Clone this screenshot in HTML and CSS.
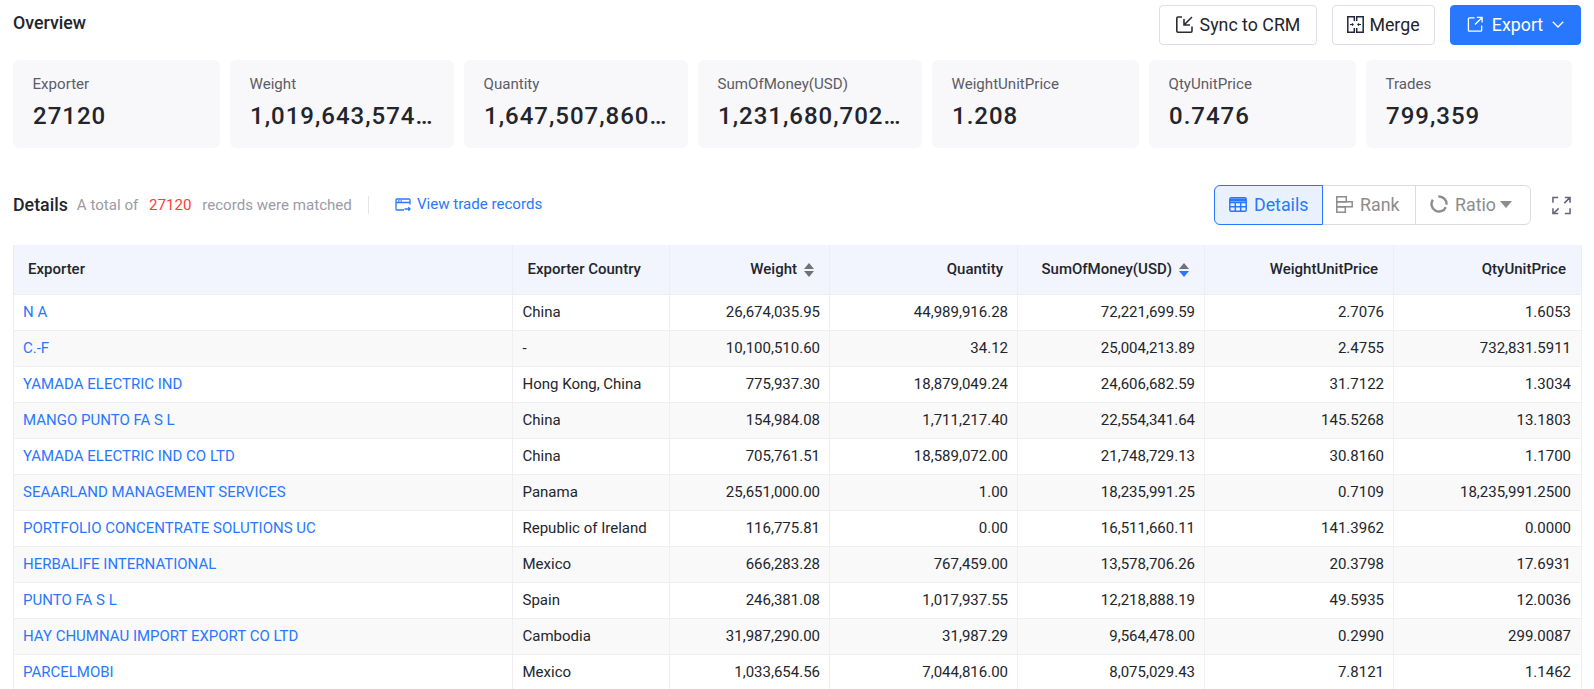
FILE: index.html
```html
<!DOCTYPE html>
<html lang="en">
<head>
    <meta charset="UTF-8">
    <title>Overview</title>
    <link rel="stylesheet" href="styles.css">
</head>
<body>
    <div class="top-bar">
        <div class="page-title">Overview</div>
        <div class="top-actions">
            <button class="btn btn-sync">
                <svg width="17" height="17" viewBox="0 0 17 17" fill="none" stroke="#2b2b33" stroke-width="1.6"><path d="M6 1H2a1.200 1.200 0 0 0-1.200 1.200V15A1.200 1.200 0 0 0 2 16.200h12.800a1.200 1.200 0 0 0 1.200-1.200v-4.500"/><path d="M16 1L8 9M8 3v6h6"/></svg>
                Sync to CRM
            </button>
            <button class="btn btn-merge">
                <svg width="17" height="17" viewBox="0 0 17 17" fill="none" stroke="#22263a" stroke-width="1.5"><path d="M7.300 5V.8H.8v15.400h6.500V12M9.700 5V.8h6.500v15.400H9.700V12"/><path d="M3 8.500h3M5 7.300l1.200 1.200L5 9.700M14 8.500h-3M12 7.300l-1.200 1.200L12 9.700" stroke-width="1.1"/></svg>
                Merge
            </button>
            <button class="btn btn-export">
                <svg width="17" height="17" viewBox="0 0 18 18" fill="none" stroke="#fff" stroke-width="1.4"><path d="M8 2H2.500a1 1 0 0 0-1 1v12a1 1 0 0 0 1 1h12a1 1 0 0 0 1-1v-5"/><path d="M10.500 1.500h5.500v5.500M16 1.500L8.500 9"/></svg>
                Export
                <svg class="chevron" width="12" height="7" viewBox="0 0 12 7" fill="none" stroke="#fff" stroke-width="1.3"><path d="M.8.8L6 6l5.200-5.200"/></svg>
            </button>
        </div>
    </div>

    <div class="cards">
        <div class="card"><div class="card-label">Exporter</div><div class="card-value">27120</div></div>
        <div class="card"><div class="card-label">Weight</div><div class="card-value">1,019,643,574.27</div></div>
        <div class="card"><div class="card-label">Quantity</div><div class="card-value">1,647,507,860.52</div></div>
        <div class="card"><div class="card-label">SumOfMoney(USD)</div><div class="card-value">1,231,680,702.18</div></div>
        <div class="card"><div class="card-label">WeightUnitPrice</div><div class="card-value">1.208</div></div>
        <div class="card"><div class="card-label">QtyUnitPrice</div><div class="card-value">0.7476</div></div>
        <div class="card"><div class="card-label">Trades</div><div class="card-value">799,359</div></div>
    </div>

    <div class="details-bar">
        <div class="details-title">Details</div>
        <div class="details-note">A total of <span class="red">27120</span> records were matched</div>
        <div class="details-sep"></div>
        <a class="trade-link">
            <svg width="16" height="13" viewBox="0 0 16 13" fill="none" stroke="#2878ff" stroke-width="1.3"><path d="M15 6.500V2a1 1 0 0 0-1-1H2a1 1 0 0 0-1 1v9a1 1 0 0 0 1 1h7"/><path d="M1 4.500h14M3 2.800h1.500M5.500 2.800H7M9.500 11H15M13.300 9.300L15 11l-1.700 1.700"/></svg>
            View trade records
        </a>
        <div class="view-tools">
            <div class="tabs">
                <div class="tab tab-details active">
                    <svg width="18" height="15" viewBox="0 0 18 15" fill="none" stroke="#2878ff" stroke-width="1.5"><rect x=".8" y=".8" width="16.400" height="13.400" rx="1.5"/><path d="M.8 5.500h16.400M.8 9.800h16.400M6.300 5.500v8.700M11.700 5.500v8.700"/><path d="M1 3h16" stroke-width="3"/></svg>
                    Details
                </div>
                <div class="tab tab-rank">
                    <svg width="17" height="17" viewBox="0 0 17 17" fill="none" stroke="#8c8c8c" stroke-width="1.5"><rect x=".8" y=".8" width="9.500" height="5"/><rect x=".8" y="5.800" width="15.400" height="5"/><rect x=".8" y="10.800" width="8.500" height="5.400"/></svg>
                    Rank
                </div>
                <div class="tab tab-ratio">
                    <svg width="18" height="18" viewBox="0 0 18 18" fill="none" stroke="#8c8c8c" stroke-width="2.4"><path d="M8.350 1.530A7.500 7.500 0 0 1 16.470 9.650M15.800 12.170A7.500 7.500 0 1 1 2.860 4.700"/></svg>
                    Ratio
                    <span class="tab-caret"></span>
                </div>
            </div>
            <svg class="fullscreen" width="19" height="19" viewBox="0 0 20 20" fill="none" stroke="#63637a" stroke-width="1.6"><path d="M1 7V1.500h5.500M13.500 1.500H19V7M19 13v5.500h-5.500M6.500 18.500H1V13M18.500 2L13 7.500M1.500 18.500L7 13"/></svg>
        </div>
    </div>

    <table class="grid">
        <colgroup>
            <col class="col-name"><col class="col-country"><col class="col-weight"><col class="col-qty"><col class="col-sum"><col class="col-wup"><col class="col-qup">
        </colgroup>
        <thead>
            <tr>
                <th class="first">Exporter</th>
                <th class="left">Exporter Country</th>
                <th>Weight<span class="sort"><i class="up"></i><i class="down"></i></span></th>
                <th>Quantity</th>
                <th>SumOfMoney(USD)<span class="sort"><i class="up"></i><i class="down on"></i></span></th>
                <th class="wide-pad">WeightUnitPrice</th>
                <th class="wide-pad">QtyUnitPrice</th>
            </tr>
        </thead>
        <tbody>
            <tr><td class="name">N A</td><td class="left">China</td><td>26,674,035.95</td><td>44,989,916.28</td><td>72,221,699.59</td><td>2.7076</td><td>1.6053</td></tr>
            <tr><td class="name">C.-F</td><td class="left">-</td><td>10,100,510.60</td><td>34.12</td><td>25,004,213.89</td><td>2.4755</td><td>732,831.5911</td></tr>
            <tr><td class="name">YAMADA ELECTRIC IND</td><td class="left">Hong Kong, China</td><td>775,937.30</td><td>18,879,049.24</td><td>24,606,682.59</td><td>31.7122</td><td>1.3034</td></tr>
            <tr><td class="name">MANGO PUNTO FA S L</td><td class="left">China</td><td>154,984.08</td><td>1,711,217.40</td><td>22,554,341.64</td><td>145.5268</td><td>13.1803</td></tr>
            <tr><td class="name">YAMADA ELECTRIC IND CO LTD</td><td class="left">China</td><td>705,761.51</td><td>18,589,072.00</td><td>21,748,729.13</td><td>30.8160</td><td>1.1700</td></tr>
            <tr><td class="name">SEAARLAND MANAGEMENT SERVICES</td><td class="left">Panama</td><td>25,651,000.00</td><td>1.00</td><td>18,235,991.25</td><td>0.7109</td><td>18,235,991.2500</td></tr>
            <tr><td class="name">PORTFOLIO CONCENTRATE SOLUTIONS UC</td><td class="left">Republic of Ireland</td><td>116,775.81</td><td>0.00</td><td>16,511,660.11</td><td>141.3962</td><td>0.0000</td></tr>
            <tr><td class="name">HERBALIFE INTERNATIONAL</td><td class="left">Mexico</td><td>666,283.28</td><td>767,459.00</td><td>13,578,706.26</td><td>20.3798</td><td>17.6931</td></tr>
            <tr><td class="name">PUNTO FA S L</td><td class="left">Spain</td><td>246,381.08</td><td>1,017,937.55</td><td>12,218,888.19</td><td>49.5935</td><td>12.0036</td></tr>
            <tr><td class="name">HAY CHUMNAU IMPORT EXPORT CO LTD</td><td class="left">Cambodia</td><td>31,987,290.00</td><td>31,987.29</td><td>9,564,478.00</td><td>0.2990</td><td>299.0087</td></tr>
            <tr><td class="name">PARCELMOBI</td><td class="left">Mexico</td><td>1,033,654.56</td><td>7,044,816.00</td><td>8,075,029.43</td><td>7.8121</td><td>1.1462</td></tr>
        </tbody>
    </table>
</body>
</html>
```

FILE: styles.css
```css
html, body {
    height: 689px;
    overflow: hidden;
}
body {
    margin: 0;
    padding: 5px 13px 0;
    background: #fff;
    color: #222;
    font-family: Roboto, "Liberation Sans", sans-serif;
    font-size: 15.1px;
    box-sizing: border-box;
}
.top-bar {
    display: flex;
    justify-content: space-between;
    height: 40px;
}
.page-title {
    font-size: 17.8px;
    font-weight: 500;
    line-height: 35px;
    color: #22252c;
}
.top-actions {
    display: flex;
    gap: 15px;
}
.btn {
    display: flex;
    align-items: center;
    justify-content: center;
    gap: 7px;
    height: 40px;
    padding: 0 0 2px;
    background: #fff;
    border: 1px solid #dcdde6;
    border-radius: 4px;
    font-family: inherit;
    font-size: 17.8px;
    color: #22252c;
}
.btn-sync { width: 158px; }
.btn-merge { width: 103px; gap: 5px; }
.btn-export {
    width: 131px;
    gap: 8px;
    background: #2878ff;
    border-color: #2878ff;
    color: #fff;
}
.chevron { margin-left: 1px; }
.cards {
    display: grid;
    grid-template-columns: 207px 224px 224px 224px 207px 207px 206px;
    gap: 10px;
    margin-top: 15px;
}
.card {
    height: 88px;
    padding: 15px 20px 0 19.5px;
    box-sizing: border-box;
    background: #f8f8fb;
    border-radius: 6px;
    min-width: 0;
}
.card-label {
    line-height: 18px;
    color: #5c5c66;
}
.card-value {
    margin: 7px 0 0 0.5px;
    font-size: 24px;
    font-weight: 500;
    line-height: 32px;
    letter-spacing: 1px;
    color: #22252c;
    white-space: nowrap;
    overflow: hidden;
    text-overflow: ellipsis;
}
.details-bar {
    display: flex;
    align-items: center;
    height: 40px;
    margin-top: 37px;
}
.details-title {
    padding-bottom: 2px;
    font-size: 17.8px;
    font-weight: 500;
    color: #22252c;
}
.details-note {
    margin-left: 9px;
    color: #9b9ba5;
}
.red {
    margin: 0 7px;
    color: #ff3b3b;
}
.details-sep {
    width: 1px;
    height: 18px;
    margin: 0 26px 0 16px;
    background: #e4e4ea;
}
.trade-link {
    display: flex;
    align-items: center;
    gap: 6px;
    color: #2878ff;
    margin-top: -2px;
}
.view-tools {
    display: flex;
    align-items: center;
    gap: 21px;
    margin-left: auto;
    padding-right: 10px;
}
.tabs {
    display: flex;
    height: 40px;
    box-sizing: border-box;
    border: 1px solid #dcdcdc;
    border-radius: 6px;
}
.tab {
    display: flex;
    align-items: center;
    gap: 7px;
    padding-bottom: 2px;
    box-sizing: border-box;
    font-size: 17.8px;
    color: #8c8c8c;
    border-right: 1px solid #dcdcdc;
}
.tab-details { width: 109px; padding-left: 14px; }
.tab-rank { width: 93px; padding-left: 13px; }
.tab-ratio { width: 114px; padding-left: 14px; border-right: 0; }
.tab.active {
    margin: -1px 0 -1px -1px;
    color: #2878ff;
    background: #e9f1ff;
    border: 1px solid #2878ff;
    border-radius: 6px 0 0 6px;
}
.tab-caret {
    width: 0;
    height: 0;
    margin-left: -3px;
    border-left: 6.5px solid transparent;
    border-right: 6.5px solid transparent;
    border-top: 7px solid #8c8c8c;
}
.grid {
    width: 1568px;
    margin-top: 20px;
    border-collapse: collapse;
    table-layout: fixed;
    font-size: 15px;
}
.col-name { width: 498.5px; }
.col-country { width: 157.5px; }
.col-weight { width: 160px; }
.col-qty { width: 188px; }
.col-sum { width: 187px; }
.col-wup { width: 189px; }
.col-qup { width: 188px; }
.grid th {
    height: 49px;
    padding: 0 14px;
    text-align: right;
    font-weight: 500;
    color: #22252c;
    background: #f2f5fd;
    border: 1px solid #ebeef5;
    border-top: 0;
    box-sizing: border-box;
}
.grid th.wide-pad { padding-right: 15px; }
.grid td {
    height: 36px;
    padding: 0 9px 0 10px;
    text-align: right;
    color: #22252c;
    border: 1px solid #efeff1;
    box-sizing: border-box;
}
.grid td:last-child { padding-right: 10px; }
.grid tbody tr:nth-child(even) td { background: #f9f9f9; }
.grid .left { text-align: left; }
.grid th.left { padding-left: 15px; }
.grid th.first { text-align: left; }
.grid td.name {
    padding-left: 9px;
    text-align: left;
    color: #2878ff;
}
.sort {
    display: inline-flex;
    flex-direction: column;
    gap: 2px;
    margin: 0 1px 0 7px;
    vertical-align: middle;
}
.sort i {
    width: 0;
    height: 0;
    border-left: 5px solid transparent;
    border-right: 5px solid transparent;
}
.sort .up { border-bottom: 6px solid #71717a; }
.sort .down { border-top: 6px solid #71717a; }
.sort .down.on { border-top-color: #2878ff; }
```
